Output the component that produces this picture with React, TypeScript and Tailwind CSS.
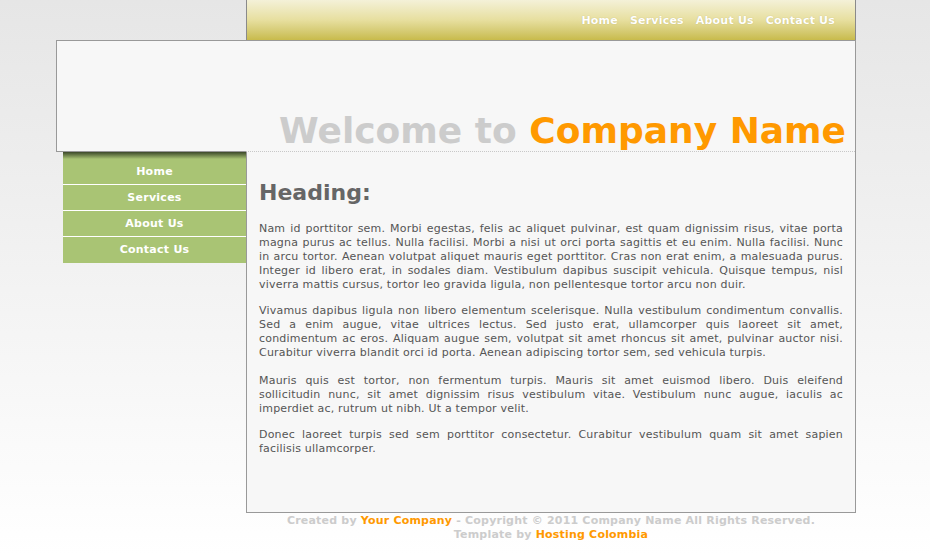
import React from "react";

const topLinks = ["Home", "Services", "About Us", "Contact Us"];
const sideLinks = ["Home", "Services", "About Us", "Contact Us"];

function App() {
  return (
    <div className="min-h-[555px] w-full bg-gradient-to-b from-[#e6e6e6] to-[#ffffff] font-['DejaVu_Sans',sans-serif]">
      <div className="ml-[56px] w-[800px]">
        {/* top menu bar */}
        <div className="ml-[190px] flex h-[40px] w-[610px] items-center justify-end gap-[12px] border-x border-[#8a8a8a] bg-gradient-to-b from-[#f4f1d8] via-[#e7df9f] via-50% to-[#c8bb4b] pt-[3px] pr-[20px]">
          {topLinks.map((l) => (
            <a key={l} className="text-[11px] font-bold tracking-[0.2px] text-white [text-shadow:0_0_1px_rgba(120,110,40,0.4)]">
              {l}
            </a>
          ))}
        </div>

        {/* header */}
        <div className="flex h-[112px] border-x border-t border-[#999] bg-[#f7f7f7]">
          <div className="w-[189px] border-b border-[#999]" />
          <div className="flex flex-1 items-end justify-end border-b border-dotted border-[#c8c8c8] pr-[9px]">
            <h1 className="text-[36px] leading-[40px] font-bold text-[#cccccc]">
              Welcome to <span className="text-[#ff9900]">Company Name</span>
            </h1>
          </div>
        </div>

        {/* body */}
        <div className="flex">
          <div className="w-[190px] pl-[7px]">
            <div className="w-[183px] bg-[#a9c474]">
              <div className="h-[7px] bg-gradient-to-b from-[#3d4a2a] to-[#a9c474]" />
              {sideLinks.map((l, i) => (
                <a
                  key={l}
                  className={
                    "flex h-[26px] items-center justify-center pt-[1px] text-[11px] font-bold tracking-[0.25px] text-white " +
                    (i < sideLinks.length - 1 ? "border-b border-white" : "")
                  }
                >
                  {l}
                </a>
              ))}
            </div>
          </div>

          <div className="h-[361px] w-[610px] border-x border-b border-[#999] bg-[#f7f7f7] px-[12px] pt-[26px]">
            <h2 className="text-[22px] leading-[30px] font-bold text-[#666]">Heading:</h2>
            <div className="mt-[14px] text-justify text-[11px] leading-[14px] tracking-[0.2px] text-[#555]">
              <p>
                Nam id porttitor sem. Morbi egestas, felis ac aliquet pulvinar, est quam dignissim risus, vitae porta
                magna purus ac tellus. Nulla facilisi. Morbi a nisi ut orci porta sagittis et eu enim. Nulla facilisi.
                Nunc in arcu tortor. Aenean volutpat aliquet mauris eget porttitor. Cras non erat enim, a malesuada
                purus. Integer id libero erat, in sodales diam. Vestibulum dapibus suscipit vehicula. Quisque tempus,
                nisl viverra mattis cursus, tortor leo gravida ligula, non pellentesque tortor arcu non duir.
              </p>
              <p className="mt-[12px]">
                Vivamus dapibus ligula non libero elementum scelerisque. Nulla vestibulum condimentum convallis. Sed a
                enim augue, vitae ultrices lectus. Sed justo erat, ullamcorper quis laoreet sit amet, condimentum ac
                eros. Aliquam augue sem, volutpat sit amet rhoncus sit amet, pulvinar auctor nisi. Curabitur viverra
                blandit orci id porta. Aenean adipiscing tortor sem, sed vehicula turpis.
              </p>
              <p className="mt-[14px]">
                Mauris quis est tortor, non fermentum turpis. Mauris sit amet euismod libero. Duis eleifend
                sollicitudin nunc, sit amet dignissim risus vestibulum vitae. Vestibulum nunc augue, iaculis ac
                imperdiet ac, rutrum ut nibh. Ut a tempor velit.
              </p>
              <p className="mt-[12px]">
                Donec laoreet turpis sed sem porttitor consectetur. Curabitur vestibulum quam sit amet sapien facilisis
                ullamcorper.
              </p>
            </div>
          </div>
        </div>

        {/* footer */}
        <div className="ml-[190px] w-[610px] pt-[1px] text-center text-[11px] leading-[14px] font-bold tracking-[0.2px] text-[#cccccc]">
          <p>
            Created by <a className="text-[#ff9900]">Your Company</a> - Copyright © 2011 Company Name All Rights
            Reserved.
          </p>
          <p>
            Template by <a className="text-[#ff9900]">Hosting Colombia</a>
          </p>
        </div>
      </div>
    </div>
  );
}

export default App;
